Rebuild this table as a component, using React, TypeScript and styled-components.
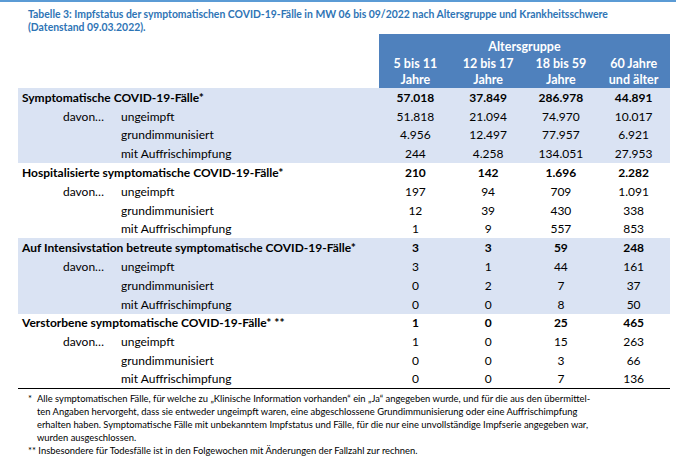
import React from "react";
import styled, { createGlobalStyle } from "styled-components";

const Global = createGlobalStyle`
  html, body { margin: 0; padding: 0; background: #fff; }
  body { font-family: Lato, "Open Sans", sans-serif; color: #000; }
`;

const Page = styled.div`
  width: 678px;
  height: 471px;
  overflow: hidden;
  background: #fff;
`;

const TopRule = styled.div`
  width: 676px;
  height: 2px;
  background: #5b9bd5;
`;

const Title = styled.div`
  padding: 6px 0 0 28px;
  height: 26px;
  font-size: 10.4px;
  line-height: 13px;
  font-weight: 700;
  color: #2e74b5;
  white-space: nowrap;
`;

const Table = styled.div`
  margin-left: 18px;
  width: 652px;
  display: grid;
  grid-template-columns: 361px repeat(4, 1fr);
`;

const HeadBlank = styled.div`
  grid-row: span 2;
`;

const HeadGroup = styled.div`
  grid-column: span 4;
  background: #4f81bd;
  color: #fff;
  font-weight: 700;
  font-size: 12.5px;
  text-align: center;
  height: 22px;
  line-height: 26px;
`;

const HeadCell = styled.div`
  background: #4f81bd;
  color: #fff;
  font-weight: 700;
  font-size: 12.5px;
  line-height: 16px;
  text-align: center;
  height: 32px;
`;

const Row = styled.div<{ $band: boolean; $last?: boolean }>`
  grid-column: 1 / -1;
  display: grid;
  grid-template-columns: subgrid;
  height: 18.8px;
  align-items: center;
  background: ${(p) => (p.$band ? "#dae3f3" : "transparent")};
  border-bottom: ${(p) => (p.$last ? "1.5px solid #000" : "none")};
  box-sizing: border-box;
`;

const Label = styled.div<{ $bold: boolean }>`
  display: flex;
  font-size: 12px;
  font-weight: ${(p) => (p.$bold ? 700 : 400)};
  padding-left: ${(p) => (p.$bold ? "4px" : "45px")};
  white-space: nowrap;
`;

const Davon = styled.span<{ $show: boolean }>`
  width: 58px;
  visibility: ${(p) => (p.$show ? "visible" : "hidden")};
`;

const Num = styled.div<{ $bold: boolean }>`
  font-size: 12px;
  font-weight: ${(p) => (p.$bold ? 700 : 400)};
  text-align: center;
`;

const Notes = styled.div`
  padding: 3px 0 0 28px;
  font-size: 9.4px;
  line-height: 13px;
`;

const Note = styled.div`
  display: flex;
`;

const Mark = styled.span<{ $w: number }>`
  flex: none;
  width: ${(p) => p.$w}px;
`;

type Group = {
  title: string;
  band: boolean;
  rows: string[][];
};

const groups: Group[] = [
  {
    title: "Symptomatische COVID-19-Fälle*",
    band: true,
    rows: [
      ["57.018", "37.849", "286.978", "44.891"],
      ["51.818", "21.094", "74.970", "10.017"],
      ["4.956", "12.497", "77.957", "6.921"],
      ["244", "4.258", "134.051", "27.953"],
    ],
  },
  {
    title: "Hospitalisierte symptomatische COVID-19-Fälle*",
    band: false,
    rows: [
      ["210", "142", "1.696", "2.282"],
      ["197", "94", "709", "1.091"],
      ["12", "39", "430", "338"],
      ["1", "9", "557", "853"],
    ],
  },
  {
    title: "Auf Intensivstation betreute symptomatische COVID-19-Fälle*",
    band: true,
    rows: [
      ["3", "3", "59", "248"],
      ["3", "1", "44", "161"],
      ["0", "2", "7", "37"],
      ["0", "0", "8", "50"],
    ],
  },
  {
    title: "Verstorbene symptomatische COVID-19-Fälle* **",
    band: false,
    rows: [
      ["1", "0", "25", "465"],
      ["1", "0", "15", "263"],
      ["0", "0", "3", "66"],
      ["0", "0", "7", "136"],
    ],
  },
];

const subLabels = ["ungeimpft", "grundimmunisiert", "mit Auffrischimpfung"];

export default function App() {
  return (
    <Page>
      <Global />
      <TopRule />
      <Title>
        Tabelle 3: Impfstatus der symptomatischen COVID-19-Fälle in MW 06 bis 09/2022 nach Altersgruppe und Krankheitsschwere
        <br />
        (Datenstand 09.03.2022).
      </Title>
      <Table>
        <HeadBlank />
        <HeadGroup>Altersgruppe</HeadGroup>
        <HeadCell>5 bis 11<br />Jahre</HeadCell>
        <HeadCell>12 bis 17<br />Jahre</HeadCell>
        <HeadCell>18 bis 59<br />Jahre</HeadCell>
        <HeadCell>60 Jahre<br />und älter</HeadCell>
        {groups.map((g, gi) =>
          g.rows.map((r, ri) => (
            <Row key={`${gi}-${ri}`} $band={g.band} $last={gi === 3 && ri === 3}>
              {ri === 0 ? (
                <Label $bold>{g.title}</Label>
              ) : (
                <Label $bold={false}>
                  <Davon $show={ri === 1}>davon…</Davon>
                  <span>{subLabels[ri - 1]}</span>
                </Label>
              )}
              {r.map((v, vi) => (
                <Num key={vi} $bold={ri === 0}>{v}</Num>
              ))}
            </Row>
          ))
        )}
      </Table>
      <Notes>
        <Note>
          <Mark $w={9}>*</Mark>
          <span>
            Alle symptomatischen Fälle, für welche zu „Klinische Information vorhanden“ ein „Ja“ angegeben wurde, und für die aus den übermittel-
            <br />
            ten Angaben hervorgeht, dass sie entweder ungeimpft waren, eine abgeschlossene Grundimmunisierung oder eine Auffrischimpfung
            <br />
            erhalten haben. Symptomatische Fälle mit unbekanntem Impfstatus und Fälle, für die nur eine unvollständige Impfserie angegeben war,
            <br />
            wurden ausgeschlossen.
          </span>
        </Note>
        <Note>
          <span>** Insbesondere für Todesfälle ist in den Folgewochen mit Änderungen der Fallzahl zur rechnen.</span>
        </Note>
      </Notes>
    </Page>
  );
}
